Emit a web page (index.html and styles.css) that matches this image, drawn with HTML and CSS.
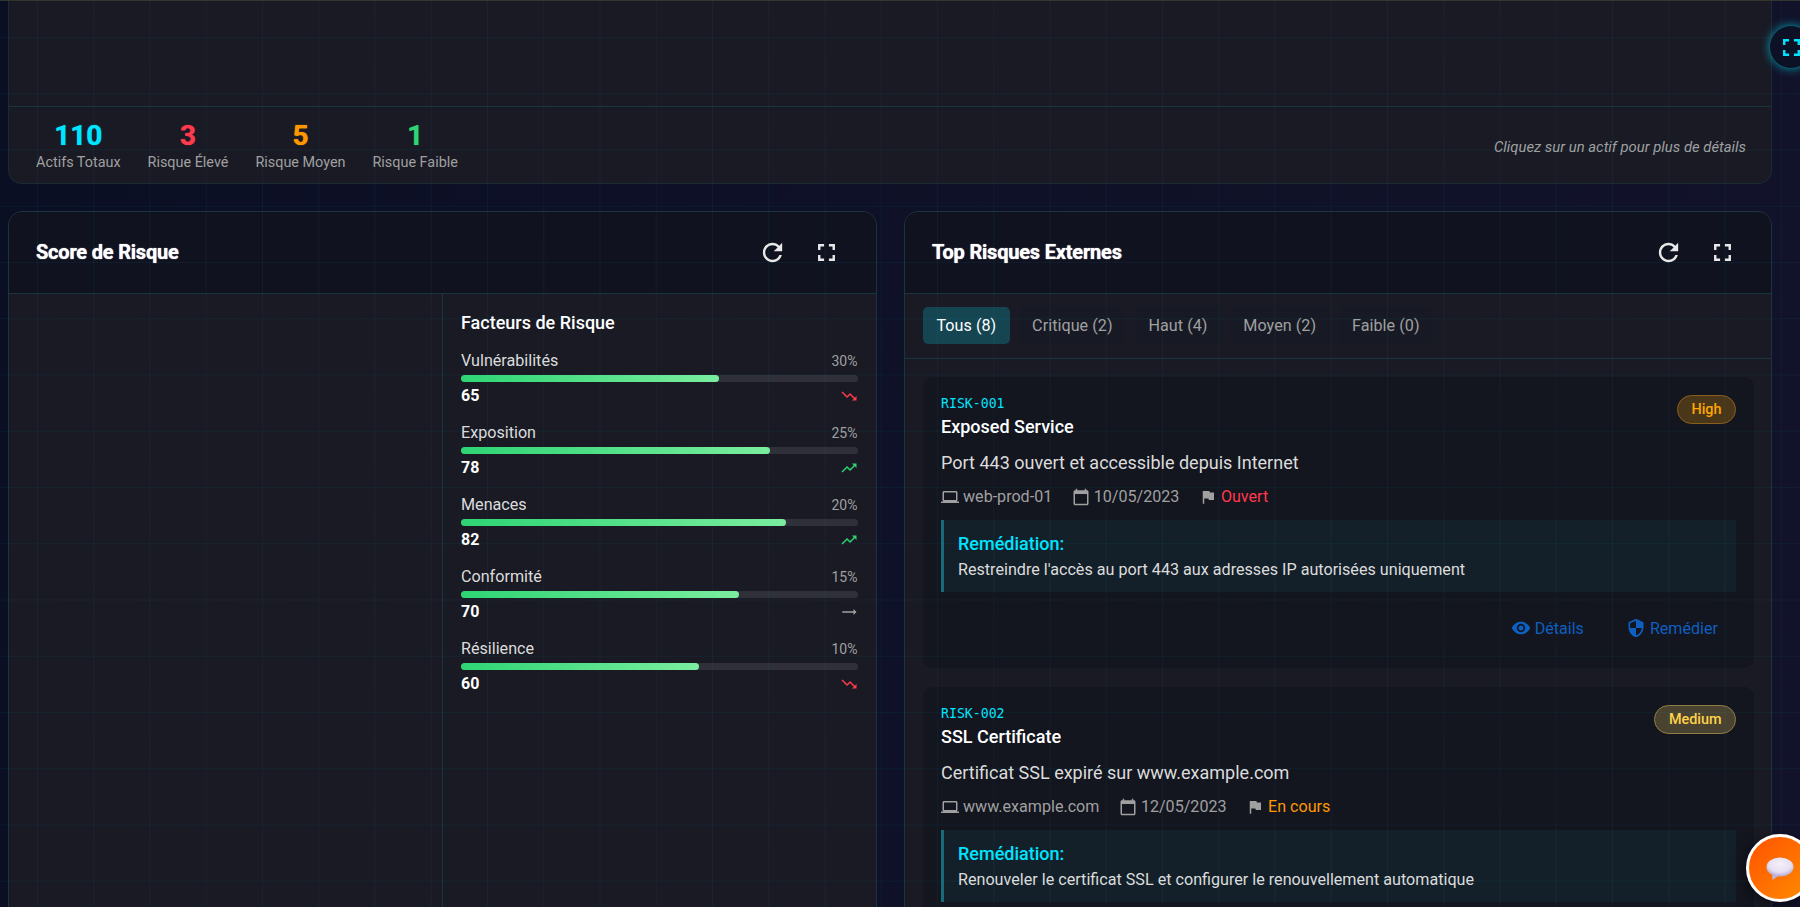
FILE: index.html
```html
<!DOCTYPE html>
<html lang="fr">
<head>
	<title>Risques</title>
	<meta charset="utf-8">
	<link rel="stylesheet" href="styles.css">
</head>
<body>
	<div class="grid-lines"></div>
	<main class="page">
		<section class="card assets">
			<div class="assets-map"></div>
			<div class="assets-foot">
				<div class="stats">
					<div class="stat"><div class="stat-num cyan">110</div><div class="stat-label">Actifs Totaux</div></div>
					<div class="stat"><div class="stat-num red">3</div><div class="stat-label">Risque Élevé</div></div>
					<div class="stat"><div class="stat-num orange">5</div><div class="stat-label">Risque Moyen</div></div>
					<div class="stat"><div class="stat-num green">1</div><div class="stat-label">Risque Faible</div></div>
				</div>
				<div class="hint">Cliquez sur un actif pour plus de détails</div>
			</div>
		</section>

		<div class="columns">
			<section class="card">
				<header class="card-head">
					<h2>Score de Risque</h2>
					<div class="head-tools">
						<svg class="tool" viewBox="0 0 24 24"><path d="M17.65 6.35C16.2 4.9 14.21 4 12 4c-4.42 0-7.99 3.58-7.99 8s3.57 8 7.99 8c3.73 0 6.84-2.55 7.73-6h-2.08c-.82 2.33-3.04 4-5.65 4-3.31 0-6-2.69-6-6s2.69-6 6-6c1.66 0 3.14.69 4.22 1.78L13 11h7V4l-2.35 2.35z"/></svg>
						<svg class="tool" viewBox="0 0 24 24"><path d="M7 14H5v5h5v-2H7v-3zm-2-4h2V7h3V5H5v5zm12 7h-3v2h5v-5h-2v3zM14 5v2h3v3h2V5h-5z"/></svg>
					</div>
				</header>
				<div class="score-body">
					<div class="score-chart"></div>
					<div class="factors">
						<h3>Facteurs de Risque</h3>

						<div class="factor">
							<div class="factor-top"><span>Vulnérabilités</span><span class="factor-pct">30%</span></div>
							<div class="bar"><div class="bar-fill" style="width:65%"></div></div>
							<div class="factor-bottom"><b>65</b><svg class="trend red" viewBox="0 0 24 24"><path d="M16 18l2.29-2.29-4.88-4.88-4 4L2 7.41 3.41 6l6 6 4-4 6.3 6.29L22 12v6z"/></svg></div>
						</div>
						<div class="factor">
							<div class="factor-top"><span>Exposition</span><span class="factor-pct">25%</span></div>
							<div class="bar"><div class="bar-fill" style="width:78%"></div></div>
							<div class="factor-bottom"><b>78</b><svg class="trend green" viewBox="0 0 24 24"><path d="M16 6l2.29 2.29-4.88 4.88-4-4L2 16.59 3.41 18l6-6 4 4 6.3-6.29L22 12V6z"/></svg></div>
						</div>
						<div class="factor">
							<div class="factor-top"><span>Menaces</span><span class="factor-pct">20%</span></div>
							<div class="bar"><div class="bar-fill" style="width:82%"></div></div>
							<div class="factor-bottom"><b>82</b><svg class="trend green" viewBox="0 0 24 24"><path d="M16 6l2.29 2.29-4.88 4.88-4-4L2 16.59 3.41 18l6-6 4 4 6.3-6.29L22 12V6z"/></svg></div>
						</div>
						<div class="factor">
							<div class="factor-top"><span>Conformité</span><span class="factor-pct">15%</span></div>
							<div class="bar"><div class="bar-fill" style="width:70%"></div></div>
							<div class="factor-bottom"><b>70</b><svg class="trend grey" viewBox="0 0 24 24"><path d="M22 12l-4-4v3H3v2h15v3z"/></svg></div>
						</div>
						<div class="factor">
							<div class="factor-top"><span>Résilience</span><span class="factor-pct">10%</span></div>
							<div class="bar"><div class="bar-fill" style="width:60%"></div></div>
							<div class="factor-bottom"><b>60</b><svg class="trend red" viewBox="0 0 24 24"><path d="M16 18l2.29-2.29-4.88-4.88-4 4L2 7.41 3.41 6l6 6 4-4 6.3 6.29L22 12v6z"/></svg></div>
						</div>
					</div>
				</div>
			</section>

			<section class="card">
				<header class="card-head">
					<h2>Top Risques Externes</h2>
					<div class="head-tools">
						<svg class="tool" viewBox="0 0 24 24"><path d="M17.65 6.35C16.2 4.9 14.21 4 12 4c-4.42 0-7.99 3.58-7.99 8s3.57 8 7.99 8c3.73 0 6.84-2.55 7.73-6h-2.08c-.82 2.33-3.04 4-5.65 4-3.31 0-6-2.69-6-6s2.69-6 6-6c1.66 0 3.14.69 4.22 1.78L13 11h7V4l-2.35 2.35z"/></svg>
						<svg class="tool" viewBox="0 0 24 24"><path d="M7 14H5v5h5v-2H7v-3zm-2-4h2V7h3V5H5v5zm12 7h-3v2h5v-5h-2v3zM14 5v2h3v3h2V5h-5z"/></svg>
					</div>
				</header>
				<div class="tabs">
					<button class="tab active">Tous (8)</button>
					<button class="tab">Critique (2)</button>
					<button class="tab">Haut (4)</button>
					<button class="tab">Moyen (2)</button>
					<button class="tab">Faible (0)</button>
				</div>
				<div class="risk-list">
					<article class="risk">
						<div class="risk-head">
							<div>
								<div class="risk-id">RISK-001</div>
								<div class="risk-title">Exposed Service</div>
							</div>
							<span class="badge high">High</span>
						</div>
						<p class="risk-desc">Port 443 ouvert et accessible depuis Internet</p>
						<div class="risk-meta">
							<span class="meta-item"><svg viewBox="0 0 24 24"><path d="M20 18c1.1 0 1.99-.9 1.99-2L22 6c0-1.1-.9-2-2-2H4c-1.1 0-2 .9-2 2v10c0 1.1.9 2 2 2H0v2h24v-2h-4zM4 6h16v10H4V6z"/></svg>web-prod-01</span>
							<span class="meta-item"><svg viewBox="0 0 24 24"><path d="M20 3h-1V1h-2v2H7V1H5v2H4c-1.1 0-2 .9-2 2v16c0 1.1.9 2 2 2h16c1.1 0 2-.9 2-2V5c0-1.1-.9-2-2-2zm0 18H4V8h16v13z"/></svg>10/05/2023</span>
							<span class="meta-item"><svg viewBox="0 0 24 24"><path d="M14.4 6L14 4H5v17h2v-7h5.6l.4 2h7V6z"/></svg><span class="red">Ouvert</span></span>
						</div>
						<div class="fix">
							<div class="fix-title">Remédiation:</div>
							<div class="fix-text">Restreindre l'accès au port 443 aux adresses IP autorisées uniquement</div>
						</div>
						<div class="risk-actions">
							<a class="action"><svg viewBox="0 0 24 24"><path d="M12 4.5C7 4.5 2.73 7.61 1 12c1.73 4.39 6 7.5 11 7.5s9.27-3.11 11-7.5c-1.73-4.39-6-7.5-11-7.5zM12 17c-2.76 0-5-2.24-5-5s2.24-5 5-5 5 2.24 5 5-2.24 5-5 5zm0-8c-1.66 0-3 1.34-3 3s1.34 3 3 3 3-1.34 3-3-1.34-3-3-3z"/></svg>Détails</a>
							<a class="action"><svg viewBox="0 0 24 24"><path d="M12 1L3 5v6c0 5.55 3.84 10.74 9 12 5.16-1.26 9-6.45 9-12V5l-9-4zm0 10.99h7c-.53 4.12-3.28 7.79-7 8.94V12H5V6.3l7-3.11v8.8z"/></svg>Remédier</a>
						</div>
					</article>

					<article class="risk">
						<div class="risk-head">
							<div>
								<div class="risk-id">RISK-002</div>
								<div class="risk-title">SSL Certificate</div>
							</div>
							<span class="badge medium">Medium</span>
						</div>
						<p class="risk-desc">Certificat SSL expiré sur www.example.com</p>
						<div class="risk-meta">
							<span class="meta-item"><svg viewBox="0 0 24 24"><path d="M20 18c1.1 0 1.99-.9 1.99-2L22 6c0-1.1-.9-2-2-2H4c-1.1 0-2 .9-2 2v10c0 1.1.9 2 2 2H0v2h24v-2h-4zM4 6h16v10H4V6z"/></svg>www.example.com</span>
							<span class="meta-item"><svg viewBox="0 0 24 24"><path d="M20 3h-1V1h-2v2H7V1H5v2H4c-1.1 0-2 .9-2 2v16c0 1.1.9 2 2 2h16c1.1 0 2-.9 2-2V5c0-1.1-.9-2-2-2zm0 18H4V8h16v13z"/></svg>12/05/2023</span>
							<span class="meta-item"><svg viewBox="0 0 24 24"><path d="M14.4 6L14 4H5v17h2v-7h5.6l.4 2h7V6z"/></svg><span class="orange">En cours</span></span>
						</div>
						<div class="fix">
							<div class="fix-title">Remédiation:</div>
							<div class="fix-text">Renouveler le certificat SSL et configurer le renouvellement automatique</div>
						</div>
					</article>
				</div>
			</section>
		</div>
	</main>

	<button class="fullscreen-btn">
		<svg viewBox="0 0 24 24"><path d="M7 14H5v5h5v-2H7v-3zm-2-4h2V7h3V5H5v5zm12 7h-3v2h5v-5h-2v3zM14 5v2h3v3h2V5h-5z"/></svg>
	</button>
	<button class="chat-btn">
		<svg viewBox="0 0 28 23">
			<defs>
				<radialGradient id="bubble" cx=".5" cy=".35" r=".7">
					<stop offset="0" stop-color="#f4f0fa"/>
					<stop offset=".6" stop-color="#e6dff2"/>
					<stop offset="1" stop-color="#a89ccf"/>
				</radialGradient>
			</defs>
			<path d="M6 15l.5 8 7-5z" fill="#c0b5dd"/>
			<ellipse cx="14" cy="10" rx="13.5" ry="9.5" fill="url(#bubble)"/>
		</svg>
	</button>
</body>
</html>
```

FILE: styles.css
```css
:root{
	--bg-panel: #191a24;
	--bg-head: #10131f;
	--bg-risk: #13151f;
	--line: #1b3540;
	--cyan: #00e5ff;
	--red: #ff3a4c;
	--orange: #ff9800;
	--green: #2ed573;
	--grey: #a0a0a0;
}
*{
	box-sizing: border-box;
	margin: 0;
	padding: 0;
}
html, body{
	height: 100%;
	overflow: hidden;
}
body{
	background: linear-gradient(100deg, #0b0f24, #12132a);
	border-top: 1px solid #35352f;
	color: #e8e8e8;
	font-family: Roboto, "Liberation Sans", sans-serif;
	font-size: 16px;
}
.grid-lines{
	position: fixed;
	inset: 0;
	z-index: 5;
	pointer-events: none;
	background-image:
		linear-gradient(to right, rgba(0, 229, 255, .05) 1px, transparent 1px),
		linear-gradient(to bottom, rgba(0, 229, 255, .05) 1px, transparent 1px);
	background-size: 56.25px 56.25px;
	background-position: 37px 37px;
}
.page{
	padding: 0 28px 0 8px;
}
.cyan{ color: var(--cyan); }
.red{ color: var(--red); }
.orange{ color: var(--orange); }
.green{ color: var(--green); }
.grey{ color: var(--grey); }

.card{
	background: var(--bg-panel);
	border: 1px solid var(--line);
	border-radius: 14px;
	overflow: hidden;
}
.assets{
	border-top: none;
	border-radius: 0 0 14px 14px;
	border-color: #1b2a35;
}
.assets-map{
	height: 106px;
	border-bottom: 1px solid var(--line);
}
.assets-foot{
	height: 76px;
	display: flex;
	align-items: center;
	justify-content: space-between;
	padding: 2px 25px 0 27px;
}
.stats{
	display: flex;
	gap: 27px;
}
.stat{
	text-align: center;
}
.stat-num{
	font-size: 28px;
	font-weight: 700;
	line-height: 32px;
	text-shadow: 0 0 1px currentColor;
}
.stat-label{
	color: var(--grey);
	font-size: 14.4px;
	line-height: 20px;
	margin-top: 1px;
}
.hint{
	color: var(--grey);
	font-size: 14.85px;
	font-style: italic;
	margin-top: 2px;
}

.columns{
	display: grid;
	grid-template-columns: 868.5px 868px;
	gap: 27.5px;
	margin-top: 27px;
	align-items: stretch;
}
.columns .card{
	height: 800px;
}
.card-head{
	background: var(--bg-head);
	border-bottom: 1px solid var(--line);
	height: 82px;
	display: flex;
	align-items: center;
	justify-content: space-between;
	padding: 0 34.5px 0 27px;
}
h2{
	color: white;
	font-size: 20px;
	font-weight: 700;
	letter-spacing: -.2px;
	margin-top: -2px;
	text-shadow: 0 0 1px white;
}
.head-tools{
	display: flex;
	gap: 25px;
}
.tool{
	width: 29px;
	height: 29px;
	fill: #e8e8e8;
}

.score-body{
	display: flex;
	height: 100%;
}
.score-chart{
	width: 434px;
	border-right: 1px solid var(--line);
}
.factors{
	flex: 1;
	padding: 17px 18px 0 18px;
}
h3{
	color: white;
	font-size: 18px;
	font-weight: 500;
	line-height: 24px;
	margin-bottom: 16px;
}
.factor{
	margin-bottom: 17px;
}
.factor-top, .factor-bottom{
	display: flex;
	justify-content: space-between;
	align-items: center;
	line-height: 20px;
	height: 20px;
}
.factor-top{
	color: #dcdcdc;
	font-size: 16.15px;
}
.factor-pct{
	color: var(--grey);
	font-size: 14px;
}
.factor-bottom{
	color: white;
}
.bar{
	height: 7px;
	background: #2f303a;
	border-radius: 4px;
	margin: 4px 0 4px;
}
.bar-fill{
	height: 100%;
	border-radius: 4px;
	background: linear-gradient(to right, #2ed573, #7bed9f);
}
.trend{
	width: 18px;
	height: 18px;
	fill: currentColor;
}

.tabs{
	display: flex;
	gap: 9px;
	padding: 13px 18px 14px;
	border-bottom: 1px solid var(--line);
}
.tab{
	background: #171a24;
	border: none;
	border-radius: 5px;
	color: var(--grey);
	font-family: inherit;
	font-size: 16.15px;
	height: 37px;
	letter-spacing: .05px;
	padding: 0 13.4px;
}
.tab.active{
	background: #164552;
	color: white;
}
.risk-list{
	padding: 18px 17px 0 18px;
}
.risk{
	background: var(--bg-risk);
	border-radius: 10px;
	padding: 18px 18px 20px;
	margin-bottom: 19px;
}
.risk-head{
	display: flex;
	justify-content: space-between;
	align-items: flex-start;
}
.risk-id{
	color: var(--cyan);
	font-family: "DejaVu Sans Mono", monospace;
	font-size: 13.2px;
	line-height: 18px;
}
.risk-title{
	color: white;
	font-size: 18px;
	font-weight: 500;
	line-height: 20px;
	margin-top: 4px;
}
.badge{
	border-radius: 15px;
	font-size: 14.4px;
	font-weight: 500;
	height: 29px;
	line-height: 27px;
	padding: 0 13.5px;
}
.badge.high{
	background: #4a3719;
	border: 1px solid #8a5f1c;
	color: #ffa502;
}
.badge.medium{
	background: #4a4230;
	border: 1px solid #8f7f42;
	color: #ffd24a;
}
.risk-desc{
	color: #dcdcdc;
	font-size: 18px;
	line-height: 24px;
	margin-top: 14px;
}
.risk-meta{
	display: flex;
	gap: 19.5px;
	color: var(--grey);
	font-size: 16.1px;
	line-height: 22px;
	margin-top: 11px;
}
.meta-item{
	display: flex;
	align-items: center;
	gap: 4px;
}
.meta-item svg{
	width: 18px;
	height: 18px;
	fill: var(--grey);
}
.fix{
	background: #142029;
	border-left: 3px solid #156b7a;
	margin-top: 12px;
	padding: 13px 14px 12px;
}
.fix-title{
	color: var(--cyan);
	font-size: 18px;
	font-weight: 500;
	line-height: 22px;
	margin-bottom: 5px;
}
.fix-text{
	color: #dcdcdc;
	font-size: 16.15px;
	line-height: 20px;
}
.risk-actions{
	display: flex;
	justify-content: flex-end;
	gap: 6px;
	margin-top: 16px;
}
.action{
	display: flex;
	align-items: center;
	gap: 4px;
	color: #0d5fc0;
	font-size: 16.1px;
	height: 40px;
	padding: 0 18px;
}
.action svg{
	width: 20px;
	height: 20px;
	fill: currentColor;
}

.fullscreen-btn{
	position: fixed;
	top: 25px;
	left: 1769px;
	width: 44px;
	height: 44px;
	z-index: 10;
	background: #0d1125;
	border: 1px solid #0b5c6e;
	border-radius: 50%;
	box-shadow: 0 0 10px rgba(0, 229, 255, .55);
	display: flex;
	align-items: center;
	justify-content: center;
}
.fullscreen-btn svg{
	width: 29px;
	height: 29px;
	fill: var(--cyan);
	flex: none;
}
.chat-btn{
	position: fixed;
	top: 834px;
	left: 1746px;
	width: 68px;
	height: 68px;
	z-index: 10;
	background: linear-gradient(135deg, #ff5200, #ff8c00);
	border: 3px solid white;
	border-radius: 50%;
	box-shadow: 0 4px 14px rgba(0, 0, 0, .5);
	display: flex;
	align-items: center;
	justify-content: center;
}
.chat-btn svg{
	width: 28px;
	height: 23px;
}
```
